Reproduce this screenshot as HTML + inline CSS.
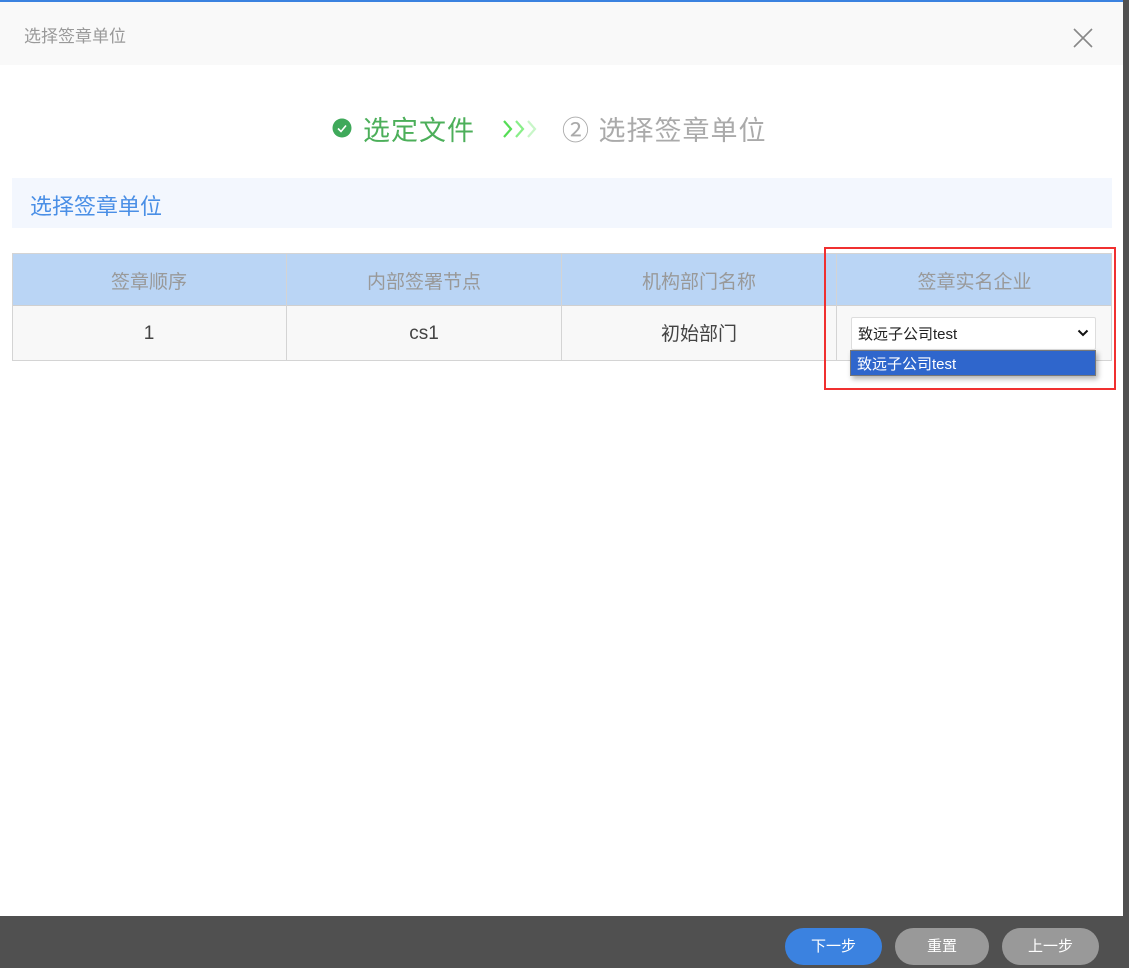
<!DOCTYPE html><html><head><meta charset="utf-8"><style>
*{margin:0;padding:0;box-sizing:border-box}
body{width:1129px;height:968px;position:relative;background:#fff;font-family:"Liberation Sans","Noto Sans CJK SC",sans-serif;overflow:hidden}
.a{position:absolute}
</style></head><body>
<div class="a" style="left:0;top:0;width:1129px;height:2px;background:#3b82e0"></div>
<div class="a" style="left:0;top:2px;width:1123px;height:63px;background:#f9f9f9"></div>
<div class="a" style="left:24px;top:22px;font-size:17px;color:#999">选择签章单位</div>
<svg class="a" style="left:1073px;top:28px" width="20" height="20"><path d="M1 1L19 19M19 1L1 19" stroke="#888" stroke-width="1.6"/></svg>
<div class="a" style="left:1123px;top:0;width:6px;height:968px;background:#505050"></div>
<svg class="a" style="left:332px;top:118px" width="20" height="20"><circle cx="10" cy="10" r="9.5" fill="#3fa95a"/><path d="M6 10.5l3 3 5-6" stroke="#fff" stroke-width="1.6" fill="none"/></svg>
<div class="a" style="left:363px;top:109px;font-size:27px;color:#4caf5a;letter-spacing:1px">选定文件</div>
<svg class="a" style="left:502px;top:119px" width="40" height="20"><path d="M2 2l7 8-7 8" stroke="#55dd55" stroke-width="2.2" fill="none"/><path d="M14 2l7 8-7 8" stroke="#88ee88" stroke-width="2.2" fill="none"/><path d="M26 2l7 8-7 8" stroke="#c8f6c8" stroke-width="2.2" fill="none"/></svg>
<div class="a" style="left:562px;top:109px;font-size:27px;color:#aaa;letter-spacing:1px">② 选择签章单位</div>
<div class="a" style="left:12px;top:178px;width:1100px;height:50px;background:#f3f7fe"></div>
<div class="a" style="left:30px;top:189px;font-size:22px;color:#4a8fe6">选择签章单位</div>
<div class="a" style="left:12px;top:253px;width:1100px;height:108px;border:1px solid #d4d4d4;background:#f8f8f8"></div>
<div class="a" style="left:13px;top:254px;width:1098px;height:52px;background:#bad5f5;border-bottom:1px solid #d0d0d0"></div>
<div class="a" style="left:286px;top:254px;width:1px;height:106px;background:#d4d4d4"></div>
<div class="a" style="left:561px;top:254px;width:1px;height:106px;background:#d4d4d4"></div>
<div class="a" style="left:836px;top:254px;width:1px;height:106px;background:#d4d4d4"></div>
<div class="a" style="left:12px;top:267px;width:274px;text-align:center;font-size:19px;color:#999">签章顺序</div>
<div class="a" style="left:287px;top:267px;width:274px;text-align:center;font-size:19px;color:#999">内部签署节点</div>
<div class="a" style="left:562px;top:267px;width:274px;text-align:center;font-size:19px;color:#999">机构部门名称</div>
<div class="a" style="left:837px;top:267px;width:275px;text-align:center;font-size:19px;color:#999">签章实名企业</div>
<div class="a" style="left:12px;top:323px;width:274px;text-align:center;font-size:19px;color:#444">1</div>
<div class="a" style="left:287px;top:323px;width:274px;text-align:center;font-size:19px;color:#444">cs1</div>
<div class="a" style="left:562px;top:319px;width:274px;text-align:center;font-size:19px;color:#444">初始部门</div>
<div class="a" style="left:851px;top:317px;width:245px;height:33px;background:#fff;border:1px solid #ddd;border-radius:2px"></div>
<div class="a" style="left:858px;top:323px;font-size:15px;color:#222">致远子公司test</div>
<svg class="a" style="left:1077px;top:328px" width="12" height="10"><path d="M1.5 2.5l4.5 4.5 4.5-4.5" stroke="#111" stroke-width="2" fill="none"/></svg>
<div class="a" style="left:850px;top:350px;width:246px;height:26px;background:#2f66cc;border:1px solid #777;box-shadow:2px 3px 5px rgba(0,0,0,.3)"></div>
<div class="a" style="left:857px;top:353px;font-size:15px;color:#fff">致远子公司test</div>
<div class="a" style="left:824px;top:247px;width:292px;height:143px;border:2px solid #f03030"></div>
<div class="a" style="left:0;top:916px;width:1129px;height:52px;background:#505050"></div>
<div class="a" style="left:785px;top:928px;width:97px;height:37px;border-radius:19px;background:#3b82e0;color:#fff;font-size:15px;text-align:center;line-height:37px">下一步</div>
<div class="a" style="left:895px;top:928px;width:94px;height:37px;border-radius:19px;background:#999;color:#fff;font-size:15px;text-align:center;line-height:37px">重置</div>
<div class="a" style="left:1002px;top:928px;width:97px;height:37px;border-radius:19px;background:#999;color:#fff;font-size:15px;text-align:center;line-height:37px">上一步</div>
</body></html>
